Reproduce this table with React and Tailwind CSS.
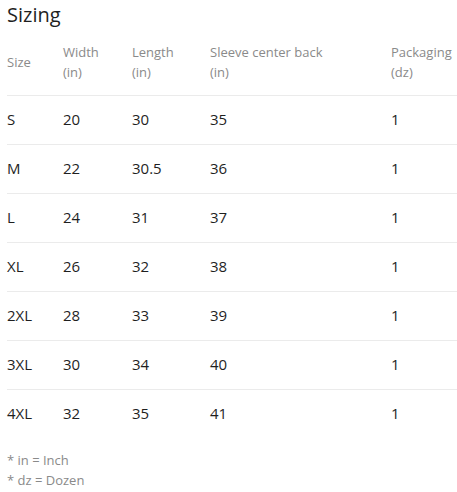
import React from 'react';

// Tabla de tallas
const rows = [
  ['S', '20', '30', '35', '1'],
  ['M', '22', '30.5', '36', '1'],
  ['L', '24', '31', '37', '1'],
  ['XL', '26', '32', '38', '1'],
  ['2XL', '28', '33', '39', '1'],
  ['3XL', '30', '34', '40', '1'],
  ['4XL', '32', '35', '41', '1'],
];

const HeaderCell = ({ top, bottom, width }) => (
  <th className={`${width} p-0 text-left align-middle font-normal text-[13px] leading-[20px] text-[#8a8a8a]`}>
    <div>{top}</div>
    {bottom && <div>{bottom}</div>}
  </th>
);

export default function App() {
  return (
    <div className="w-[457px] h-[492px] bg-white pl-[7px] font-['Open_Sans',sans-serif] text-[#1f1f1f]">
      <h2 className="text-[20px] leading-[30px] font-normal">Sizing</h2>
      <table className="w-[450px] table-fixed border-collapse">
        <thead>
          <tr className="h-[65px] border-b border-[#ebebeb]">
            <HeaderCell width="w-[56px]" top="Size" />
            <HeaderCell width="w-[69px]" top="Width" bottom="(in)" />
            <HeaderCell width="w-[78px]" top="Length" bottom="(in)" />
            <HeaderCell width="w-[181px]" top="Sleeve center back" bottom="(in)" />
            <HeaderCell width="w-[66px]" top="Packaging" bottom="(dz)" />
          </tr>
        </thead>
        <tbody>
          {rows.map((r, i) => (
            <tr key={r[0]} className={`h-[49px] ${i < rows.length - 1 ? 'border-b border-[#ebebeb]' : ''}`}>
              {r.map((c, j) => (
                <td key={j} className="p-0 pb-[2px] text-[15px] leading-[20px] align-middle">{c}</td>
              ))}
            </tr>
          ))}
        </tbody>
      </table>
      <div className="mt-[12px] text-[13px] leading-[20px] text-[#8a8a8a]">
        <div>* in = Inch</div>
        <div>* dz = Dozen</div>
      </div>
    </div>
  );
}
